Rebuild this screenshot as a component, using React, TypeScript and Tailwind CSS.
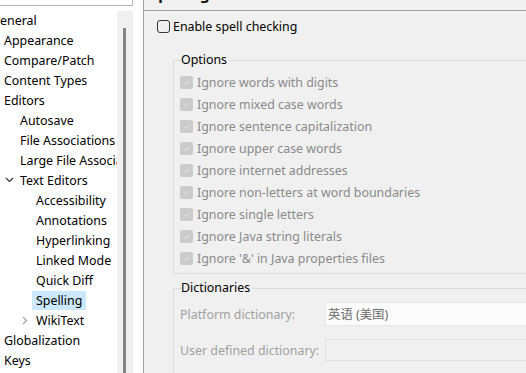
import React from 'react'

type Node = {
  label: string
  pad: string
  chevron?: 'down' | 'right'
  selected?: boolean
}

const tree: Node[] = [
  { label: 'General', pad: 'pl-[0px] -ml-[13px]' },
  { label: 'Appearance', pad: 'pl-[0px]' },
  { label: 'Compare/Patch', pad: 'pl-[0px]' },
  { label: 'Content Types', pad: 'pl-[0px]' },
  { label: 'Editors', pad: 'pl-[0px]' },
  { label: 'Autosave', pad: 'pl-[16px]' },
  { label: 'File Associations', pad: 'pl-[16px]' },
  { label: 'Large File Associations', pad: 'pl-[16px]' },
  { label: 'Text Editors', pad: 'pl-[0px]', chevron: 'down' },
  { label: 'Accessibility', pad: 'pl-[32px]' },
  { label: 'Annotations', pad: 'pl-[32px]' },
  { label: 'Hyperlinking', pad: 'pl-[32px]' },
  { label: 'Linked Mode', pad: 'pl-[32px]' },
  { label: 'Quick Diff', pad: 'pl-[32px]' },
  { label: 'Spelling', pad: 'pl-[32px]', selected: true },
  { label: 'WikiText', pad: 'pl-[16px]', chevron: 'right' },
  { label: 'Globalization', pad: 'pl-[0px]' },
  { label: 'Keys', pad: 'pl-[0px]' },
]

const options = [
  'Ignore words with digits',
  'Ignore mixed case words',
  'Ignore sentence capitalization',
  'Ignore upper case words',
  'Ignore internet addresses',
  'Ignore non-letters at word boundaries',
  'Ignore single letters',
  'Ignore Java string literals',
  "Ignore '&' in Java properties files",
]

function Chevron({ dir }: { dir: 'down' | 'right' }) {
  return (
    <span className="w-[16px] h-[20px] flex items-center justify-center shrink-0">
      {dir === 'down' ? (
        <svg width="9" height="6" viewBox="0 0 9 6" className="ml-[3px]">
          <path d="M1 1 L4.5 4.5 L8 1" fill="none" stroke="#333" strokeWidth="1.2" />
        </svg>
      ) : (
        <svg width="6" height="9" viewBox="0 0 6 9" className="ml-[2px]">
          <path d="M1 1 L4.5 4.5 L1 8" fill="none" stroke="#a6a6a6" strokeWidth="1.3" />
        </svg>
      )}
    </span>
  )
}

function DisabledCheck() {
  return (
    <span className="w-[13px] h-[13px] rounded-[2px] bg-[#cbcbcb] flex items-center justify-center shrink-0">
      <svg width="13" height="13" viewBox="0 0 13 13">
        <path d="M4 6.8 L5.8 8.5 L9 4.8" fill="none" stroke="#e9e9e9" strokeWidth="1" />
      </svg>
    </span>
  )
}

export default function App() {
  return (
    <div className="w-[526px] h-[373px] overflow-hidden flex bg-white text-[12.4px] text-black font-['Noto_Sans','Noto_Sans_CJK_SC',sans-serif]">
      {/* left tree */}
      <div className="w-[143px] shrink-0 flex flex-col">
        <div className="h-[6px] w-[133px] border-b border-r border-[#b4b4b4] bg-white shrink-0" />
        <div className="flex flex-1 min-h-0">
          <div className="w-[117px] shrink-0 overflow-hidden pt-[4px]">
            {tree.map((n) => (
              <div key={n.label} className={`h-[20px] flex items-center whitespace-nowrap ${n.pad}`}>
                {n.chevron && <Chevron dir={n.chevron} />}
                <span
                  className={`px-[4px] h-[19px] leading-[20px] ${n.selected ? 'bg-[#cce8ff]' : ''}`}
                >
                  {n.label}
                </span>
              </div>
            ))}
          </div>
          <div className="w-[16px] shrink-0 mt-[5px] bg-[#f0f0f0] pt-[17px] flex flex-col">
            <div className="ml-[6px] w-[3px] flex-1 bg-[#858585]" />
          </div>
        </div>
      </div>

      {/* right page */}
      <div className="flex-1 min-w-0 bg-[#f0f0f0] border-l border-[#a0a0a0] overflow-hidden">
        <div className="h-[11px] border-b border-[#a0a0a0] overflow-hidden pl-[6px]">
          <div className="-mt-[16px] leading-[20px] text-[15px] font-bold">Spelling</div>
        </div>

        <div className="pl-[13px] leading-[18px]">
          <div className="mt-[4px] h-[22px] flex items-center gap-[3px]">
            <span className="w-[13px] h-[13px] rounded-[3px] border border-[#333]" />
            <span className="pt-[1px]">Enable spell checking</span>
          </div>

          <fieldset className="ml-[16px] mt-[15px] w-[420px] border border-[#dcdcdc] pl-[6px] pt-[3px] pb-[4px]">
            <legend className="ml-[1px] px-0 leading-[16px] pr-[2px]">Options</legend>
            {options.map((o) => (
              <div key={o} className="h-[22px] flex items-center gap-[4px] text-[#8a8a8a]">
                <DisabledCheck />
                <span className="pt-[1px]">{o}</span>
              </div>
            ))}
          </fieldset>

          <fieldset className="ml-[16px] mt-[6px] w-[420px] h-[120px] border border-[#dcdcdc] pl-[6px] pt-[6px]">
            <legend className="ml-[1px] px-0 leading-[16px] pr-[2px]">Dictionaries</legend>
            <div className="h-[24px] flex items-center">
              <span className="w-[145px] shrink-0 text-[#a0a0a0] pt-[1px]">Platform dictionary:</span>
              <div className="flex-1 h-[24px] bg-[#fbfbfb] border border-[#e6e6e6] pl-[2px] pt-[1px] flex items-center text-[#6d6d6d]">
                英语 (美国)
              </div>
            </div>
            <div className="mt-[13px] h-[22px] flex items-center">
              <span className="w-[145px] shrink-0 text-[#a0a0a0] pt-[1px]">User defined dictionary:</span>
              <div className="flex-1 h-[22px] bg-[#f0f0f0] border border-[#e0e0e0]" />
            </div>
          </fieldset>
        </div>
      </div>
    </div>
  )
}
